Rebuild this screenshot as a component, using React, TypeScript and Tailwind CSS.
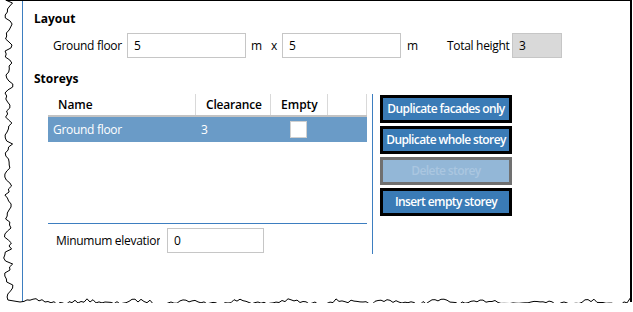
import React from 'react';

// 乱数（固定シード）でギザギザの切り取り線を作る
function rng(seed: number) {
  let s = seed;
  return () => {
    s = (s * 16807) % 2147483647;
    return s / 2147483647;
  };
}

function tornEdges() {
  const r = rng(7);
  const left: string[] = [];
  for (let y = 0; y <= 300; y += 3) {
    const x = 8 + 3 * Math.sin(y / 3.2) + (r() * 2 - 1) * 2.5;
    left.push(`${x.toFixed(1)},${y}`);
  }
  left.push('20,302');
  const bottom: string[] = ['20,302'];
  for (let x = 24; x <= 627; x += 3) {
    const y = 302 + 1.5 * Math.sin(x / 8) + (r() * 2 - 1) * 1.8;
    bottom.push(`${x},${y.toFixed(1)}`);
  }
  bottom.push('631,297');
  return { left: left.join(' '), bottom: bottom.join(' ') };
}

const edges = tornEdges();

function TextBox({ value, className }: { value: string; className: string }) {
  return (
    <div className={`h-[25px] border border-[#c6c6c6] flex items-center pl-[6px] text-[12px] text-black ${className}`}>
      {value}
    </div>
  );
}

function ActionButton({ label, disabled }: { label: string; disabled?: boolean }) {
  return (
    <div
      className={
        disabled
          ? 'h-[28px] w-[132px] border-[3px] border-[#707070] bg-[#93b7d7] text-[#aac6e0] flex items-center justify-center whitespace-nowrap text-[12px] font-semibold tracking-[-0.6px]'
          : 'h-[28px] w-[132px] border-[3px] border-black bg-[#3a7bb6] text-white flex items-center justify-center whitespace-nowrap text-[12px] font-semibold tracking-[-0.6px]'
      }
    >
      {label}
    </div>
  );
}

export default function App() {
  return (
    <div className="relative w-[633px] h-[312px] bg-white overflow-hidden font-['Open_Sans','Noto_Sans',sans-serif] text-black">
      {/* パネル本体 */}
      <div className="ml-[22px] w-[610px] h-[302px] border-l border-l-[#3d7ec0] border-t border-t-black border-r-2 border-r-black pl-[11px] pt-[10px]">
        <div className="h-4 leading-4 text-[12px] font-bold">Layout</div>

        {/* 寸法 */}
        <div className="mt-[6px] flex items-center h-[25px] text-[12px]">
          <span className="ml-[19px] w-[74px] whitespace-nowrap tracking-[-0.3px]">Ground floor</span>
          <TextBox value="5" className="w-[119px]" />
          <span className="ml-[5px] w-[20px]">m</span>
          <span className="w-[11px]">x</span>
          <TextBox value="5" className="w-[119px]" />
          <span className="ml-[6px] w-[40px]">m</span>
          <span className="w-[65px] whitespace-nowrap tracking-[-0.3px]">Total height</span>
          <TextBox value="3" className="w-[50px] bg-[#d9d9d9]" />
        </div>

        <div className="mt-[13px] h-4 leading-4 text-[12px] font-bold">Storeys</div>

        <div className="mt-[7px] flex">
          {/* 階リスト */}
          <div className="ml-[14px] w-[319px] flex flex-col">
            <div className="h-[21px] flex text-[12px] font-semibold">
              <div className="w-[147px] pl-[10px] flex items-center">Name</div>
              <div className="w-[75px] pl-[10px] border-l border-[#d9d9d9] flex items-center tracking-[-0.2px]">Clearance</div>
              <div className="w-[57px] pl-[10px] border-l border-[#d9d9d9] flex items-center">Empty</div>
              <div className="w-[40px] border-l border-r border-[#d9d9d9]" />
            </div>
            <div className="h-[2px] bg-[#c3c3c3]" />
            <div className="h-[25px] bg-[#6a9bc7] flex items-center text-white text-[12px]">
              <div className="w-[147px] pl-[5px] tracking-[-0.3px]">Ground floor</div>
              <div className="w-[95px] pl-[6px]">3</div>
              <div className="w-[17px] h-[17px] bg-white border border-[#d0d0d0]" />
            </div>
            <div className="h-[81px]" />
            <div className="h-px bg-[#3d7ec0]" />
            <div className="mt-[4px] flex items-center h-[25px] text-[12px]">
              <span className="ml-[8px] w-[104px] overflow-hidden whitespace-nowrap tracking-[-0.3px]">Minumum elevation</span>
              <TextBox value="0" className="ml-[7px] w-[97px]" />
            </div>
          </div>

          <div className="ml-[5px] w-px h-[160px] bg-[#3d7ec0]" />

          {/* 操作ボタン */}
          <div className="ml-[7px] mt-px flex flex-col gap-[3px]">
            <ActionButton label="Duplicate facades only" />
            <ActionButton label="Duplicate whole storey" />
            <ActionButton label="Delete storey" disabled />
            <ActionButton label="Insert empty storey" />
          </div>
        </div>
      </div>

      {/* 切り取り線 */}
      <svg className="absolute inset-0 pointer-events-none" width="633" height="312">
        <polyline points={edges.left} fill="none" stroke="#000" strokeWidth="1" />
        <polyline points={edges.bottom} fill="none" stroke="#000" strokeWidth="1" />
        <line x1="6" y1="0.5" x2="24" y2="0.5" stroke="#000" strokeWidth="1" />
        <rect x="0" y="303" width="633" height="9" fill="white" />
      </svg>
    </div>
  );
}
